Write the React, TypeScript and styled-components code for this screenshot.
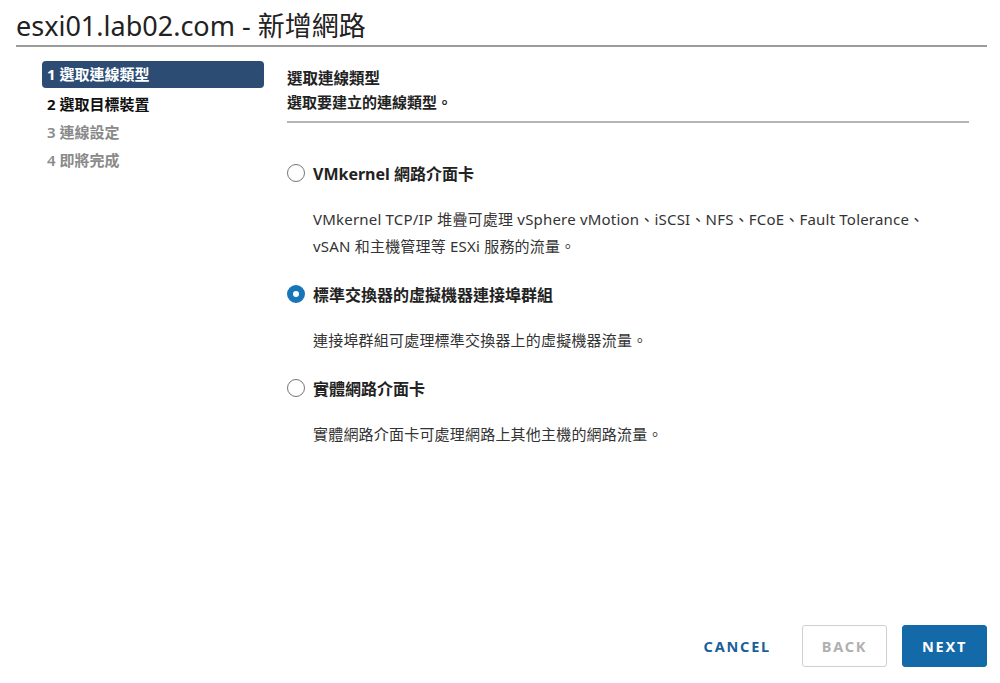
import React, { useState } from 'react';
import styled, { createGlobalStyle } from 'styled-components';

const GlobalStyle = createGlobalStyle`
    html, body {
        margin: 0;
        padding: 0;
        background: #fff;
    }
    body {
        font-family: "Noto Sans", "Noto Sans CJK TC", sans-serif;
        color: #222;
    }
`;

const Page = styled.div`
    min-height: 100vh;
    display: flex;
    flex-direction: column;
    box-sizing: border-box;
`;

const Header = styled.div`
    margin: 0 13px 0 16px;
    padding-top: 9px;
    height: 36px;
    border-bottom: 2px solid #9b9b9b;
`;

const Title = styled.h1`
    margin: 0;
    font-size: 27px;
    font-weight: 400;
    line-height: 34px;
    color: #222;
`;

const Body = styled.div`
    flex: 1;
    display: flex;
    padding: 14px 31px 0 42px;
    gap: 23px;
`;

const Nav = styled.ul`
    list-style: none;
    margin: 0;
    padding: 0;
    width: 222px;
    flex-shrink: 0;
`;

const NavItem = styled.li<{ $state: 'active' | 'done' | 'todo' }>`
    height: ${p => (p.$state === 'active' ? '27px' : '28px')};
    margin-bottom: ${p => (p.$state === 'active' ? '2px' : '0')};
    line-height: ${p => (p.$state === 'active' ? '27px' : '28px')};
    padding: 0 5px;
    box-sizing: border-box;
    font-size: 15px;
    font-weight: 700;
    border-radius: 4px;
    background: ${p => (p.$state === 'active' ? '#2c4c74' : 'transparent')};
    color: ${p => (p.$state === 'active' ? '#fff' : p.$state === 'done' ? '#111' : '#8a8a8a')};
    ${p => p.$state === 'todo' && 'font-weight: 600;'}
`;

const Content = styled.div`
    flex: 1;
    padding-top: 4px;
`;

const SectionHead = styled.div`
    border-bottom: 2px solid #b5b5b5;
    padding-bottom: 7px;
    margin-bottom: 30px;
`;

const SectionTitle = styled.div`
    font-size: 15.5px;
    font-weight: 700;
    line-height: 24px;
    margin-top: 1px;
`;

const SectionSub = styled.div`
    font-size: 15px;
    font-weight: 600;
    line-height: 24px;
`;

const Option = styled.div`
    margin-bottom: 14px;
`;

const OptionRow = styled.label`
    display: flex;
    align-items: center;
    gap: 8px;
    height: 40px;
    cursor: pointer;
`;

const Radio = styled.span<{ $checked: boolean }>`
    width: 18px;
    height: 18px;
    box-sizing: border-box;
    border-radius: 50%;
    border: ${p => (p.$checked ? '6px solid #1775b9' : '1.5px solid #767676')};
    background: #fff;
    flex-shrink: 0;
`;

const OptionLabel = styled.span`
    font-size: 16px;
    font-weight: 700;
    color: #222;
`;

const Desc = styled.p`
    margin: 13px 0 0 26px;
    max-width: 630px;
    font-size: 15px;
    letter-spacing: 0.2px;
    line-height: 27px;
    color: #333;
`;

const Footer = styled.div`
    display: flex;
    justify-content: flex-end;
    align-items: center;
    gap: 15px;
    padding: 0 13px 16px 0;
`;

const Button = styled.button<{ $kind: 'link' | 'outline' | 'primary' }>`
    height: 42px;
    min-width: 85px;
    padding: 0 16px;
    box-sizing: border-box;
    font-family: "Noto Sans", sans-serif;
    font-size: 14.5px;
    font-weight: 700;
    letter-spacing: 1.8px;
    border-radius: 3px;
    cursor: pointer;
    background: ${p => (p.$kind === 'primary' ? '#1469a8' : '#fff')};
    color: ${p => (p.$kind === 'primary' ? '#fff' : p.$kind === 'outline' ? '#b0b0b0' : '#1b5f99')};
    border: ${p => (p.$kind === 'outline' ? '1.5px solid #cfcfcf' : p.$kind === 'primary' ? '1px solid #1469a8' : 'none')};
`;

const steps = [
    { label: '1 選取連線類型', state: 'active' as const },
    { label: '2 選取目標裝置', state: 'done' as const },
    { label: '3 連線設定', state: 'todo' as const },
    { label: '4 即將完成', state: 'todo' as const },
];

const options = [
    {
        label: 'VMkernel 網路介面卡',
        desc: 'VMkernel TCP/IP 堆疊可處理 vSphere vMotion、iSCSI、NFS、FCoE、Fault Tolerance、vSAN 和主機管理等 ESXi 服務的流量。',
    },
    {
        label: '標準交換器的虛擬機器連接埠群組',
        desc: '連接埠群組可處理標準交換器上的虛擬機器流量。',
    },
    {
        label: '實體網路介面卡',
        desc: '實體網路介面卡可處理網路上其他主機的網路流量。',
    },
];

const App: React.FC = () => {
    const [selected, setSelected] = useState(1);
    return (
        <Page>
            <GlobalStyle />
            <Header>
                <Title>esxi01.lab02.com - 新增網路</Title>
            </Header>
            <Body>
                <Nav>
                    {steps.map((s, i) => (
                        <NavItem key={i} $state={s.state}>{s.label}</NavItem>
                    ))}
                </Nav>
                <Content>
                    <SectionHead>
                        <SectionTitle>選取連線類型</SectionTitle>
                        <SectionSub>選取要建立的連線類型。</SectionSub>
                    </SectionHead>
                    {options.map((o, i) => (
                        <Option key={i}>
                            <OptionRow onClick={() => setSelected(i)}>
                                <Radio $checked={selected === i} />
                                <OptionLabel>{o.label}</OptionLabel>
                            </OptionRow>
                            <Desc>{o.desc}</Desc>
                        </Option>
                    ))}
                </Content>
            </Body>
            <Footer>
                <Button $kind="link">CANCEL</Button>
                <Button $kind="outline">BACK</Button>
                <Button $kind="primary">NEXT</Button>
            </Footer>
        </Page>
    );
};

export default App;
